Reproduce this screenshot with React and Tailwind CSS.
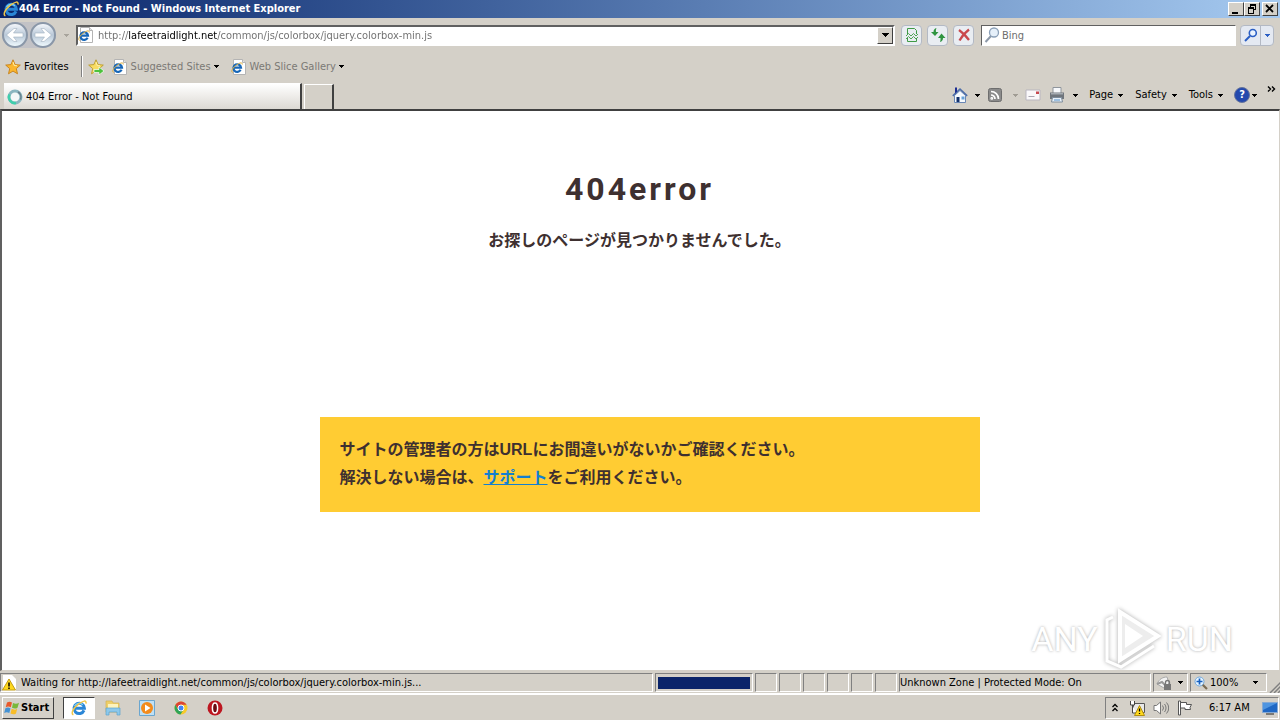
const UI = "font-['DejaVu_Sans_Condensed','DejaVu_Sans',sans-serif]";

function Caret({ className = "text-black" }) {
  return (
    <svg viewBox="0 0 5 3" className={`h-[3px] w-[5px] shrink-0 ${className}`} shapeRendering="crispEdges" aria-hidden="true">
      <path d="M0 0h5v1H0zM1 1h3v1H1zM2 2h1v1H2z" fill="currentColor" />
    </svg>
  );
}

function IeGlyph({ className }) {
  return (
    <svg viewBox="0 0 16 16" className={`shrink-0 ${className}`} aria-hidden="true">
      <path d="M13 10.400A5.200 5.200 0 1 1 13.400 8.200H4.200" fill="none" stroke="#2a86d6" strokeWidth="3" />
      <path d="M11.800 4.800A5.200 5.200 0 0 0 3.500 6" fill="none" stroke="#7fd0f8" strokeWidth="1.300" />
      <path d="M2.400 14.800C-.6 13.500 2.500 8 7.500 4.200S15.500 0 15 3.600" fill="none" stroke="#f0c648" strokeWidth="1.500" />
    </svg>
  );
}

function IePage() {
  return (
    <svg viewBox="0 0 16 16" className="h-4 w-4 shrink-0" aria-hidden="true">
      <path d="M2.500.5h9l3 3v12h-12z" fill="#fff" stroke="#b4b4b4" />
      <path d="M11.500.5v3h3" fill="#e3e3e3" stroke="#b4b4b4" />
      <path d="M9.600 10.800A3.800 3.800 0 1 1 10 8.700H3.500" fill="none" stroke="#1767b8" strokeWidth="2.200" />
      <path d="M1.500 13.500C-.5 12 2 8.500 5.500 6S11.500 3 11.300 5.500" fill="none" stroke="#e0b040" />
    </svg>
  );
}

function Star({ add }) {
  return (
    <svg viewBox="0 0 16 16" className="h-4 w-4 shrink-0" aria-hidden="true">
      <path d="M8 .8l2.100 4.800 5.200.5-4 3.500 1.200 5.200L8 12.100l-4.500 2.700 1.200-5.200-4-3.500 5.200-.5z" fill={add ? "#f8dc63" : "#fbb62d"} stroke={add ? "#b99a28" : "#c57f16"} strokeWidth=".9" />
      <path d="M8 3l1.200 3.500 2.800.3" fill="none" stroke="#fff0a8" />
      {add && <path d="M6 10.500h5V8l5 4-5 4v-2.500H6z" fill="#4cc23c" stroke="#fff" strokeWidth=".7" />}
    </svg>
  );
}

function RoundArrow({ flip, label }) {
  return (
    <button aria-label={label} className="h-[26px] w-[26px] shrink-0 rounded-full border-2 border-[#8a97a8] bg-linear-to-b from-[#f4f7fb] via-[#b9c8d8] to-[#eef8fc]">
      <svg viewBox="0 0 22 22" className={flip ? "h-[22px] w-[22px] rotate-180" : "h-[22px] w-[22px]"} aria-hidden="true">
        <path d="M2.500 11L10 4.500h3L9.500 9H19v4H9.500l3.500 4.500h-3z" fill="#fff" stroke="#a3b1c1" strokeWidth=".6" />
      </svg>
    </button>
  );
}

function WinButton({ label, children }) {
  return (
    <button aria-label={label} className="h-[14px] w-4 border border-t-white border-l-white border-r-[#404040] border-b-[#404040] bg-[#d4d0c8]">
      <svg viewBox="0 0 14 12" className="h-3 w-[14px]" shapeRendering="crispEdges" aria-hidden="true">{children}</svg>
    </button>
  );
}

function TitleBar() {
  return (
    <header className="flex h-[18px] items-center bg-linear-to-r from-[#0a246a] to-[#a6caf0] pr-0.5 pl-[3px]">
      <IeGlyph className="h-4 w-4" />
      <h1 className="flex-1 text-[11px] font-bold text-white">404 Error - Not Found - Windows Internet Explorer</h1>
      <WinButton label="Minimize"><path d="M3 9h6v2H3z" /></WinButton>
      <WinButton label="Restore">
        <path d="M5 1h6v2H5zM10 3h1v4H9V6h1zM5 3h1v1H5zM3 4h6v2H3zM3 6h1v4H3zM8 6h1v4H8zM3 10h6v1H3z" />
      </WinButton>
      <div className="ml-0.5 flex">
        <WinButton label="Close"><path d="M3 2l7 7M10 2L3 9" stroke="#000" strokeWidth="1.800" shapeRendering="auto" /></WinButton>
      </div>
    </header>
  );
}

const sunken = "border border-t-[#606060] border-l-[#606060] border-r-white border-b-white";
const toolButton = "flex h-[21px] w-[21px] shrink-0 items-center justify-center rounded-sm border border-[#b3b9c4] bg-[#e9edf2]";

function AddressRow() {
  return (
    <div className="flex h-[34px] items-center pr-1.5 pl-0.5">
      <nav className="flex items-center gap-0.5 rounded-full bg-[#c2c2c6]" aria-label="History">
        <RoundArrow label="Back" />
        <RoundArrow flip label="Forward" />
      </nav>
      <button aria-label="Recent pages" className="flex w-5 justify-center"><Caret className="text-[#a8a49c]" /></button>
      <div className={`flex h-[21px] flex-1 items-center border-2 bg-white ${sunken}`}>
        <IePage />
        <input
          aria-label="Address"
          defaultValue="http://lafeetraidlight.net/common/js/colorbox/jquery.colorbox-min.js"
          className="ml-1 h-[17px] min-w-0 flex-1 bg-[image:linear-gradient(to_right,#6d6d6d_30px,#000_30px,#000_119px,#6d6d6d_119px)] bg-clip-text text-transparent outline-none"
        />
        <button aria-label="Address history" className="flex h-[17px] w-4 items-center justify-center border border-t-white border-l-white border-r-[#404040] border-b-[#404040] bg-[#d4d0c8]">
          <svg viewBox="0 0 7 4" className="h-1 w-[7px]" shapeRendering="crispEdges" aria-hidden="true"><path d="M0 0h7v1H0zM1 1h5v1H1zM2 2h3v1H2zM3 3h1v1H3z" /></svg>
        </button>
      </div>
      <div className="mr-[7px] ml-1.5 flex gap-[5px]">
        <button aria-label="Compatibility view" className={toolButton}>
          <svg viewBox="0 0 16 16" className="h-4 w-4" fill="none" stroke="#3f9b46" aria-hidden="true">
            <path d="M3.500 7V1.500h7l2 2V7M3.500 11v3.500h9V11" />
            <path d="M2 9l2.500-2.500L7 9l2.500-2.500L12 9l2-2M2 12l2.500-2.500L7 12l2.500-2.500L12 12l2-2" strokeWidth=".9" />
          </svg>
        </button>
        <button aria-label="Refresh" className={toolButton}>
          <svg viewBox="0 0 16 16" className="h-4 w-4" fill="#2f9440" aria-hidden="true">
            <path d="M6.500 1C4.500 1.500 3.500 3 3.500 5H1l4 4 3.500-4H6C5.700 3.500 5.900 2.300 6.500 1zM10 15c2-.5 3-2 3-4h2.500l-4-4.500L8 11h2.500c.2 1.500 0 2.700-.5 4z" />
          </svg>
        </button>
        <button aria-label="Stop" className={toolButton}>
          <svg viewBox="0 0 16 16" className="h-4 w-4" aria-hidden="true">
            <path d="M3 3c3.500 2.500 7 6 10 10M13 2.500C9 5.500 6 9 3.500 13.500" stroke="#c9484c" strokeWidth="2.300" fill="none" />
          </svg>
        </button>
      </div>
      <div className={`flex h-[21px] w-[255px] items-center bg-white pl-0.5 ${sunken}`}>
        <svg viewBox="0 0 16 16" className="h-4 w-4 shrink-0" aria-hidden="true">
          <path d="M7 9l-5.500 6" stroke="#8c98a8" strokeWidth="2" />
          <circle cx="10" cy="5.500" r="4.500" fill="#e6f0fa" stroke="#8ba0b8" strokeWidth="1.300" />
        </svg>
        <input aria-label="Search" placeholder="Bing" className="ml-0.5 h-[17px] min-w-0 flex-1 outline-none placeholder:text-[#6d6d6d]" />
      </div>
      <div className="ml-1 flex rounded-sm border border-[#b3b9c4] bg-[#e4e9f2]">
        <button aria-label="Search Bing" className="flex h-[19px] w-5 items-center justify-center border-r border-[#b3b9c4]">
          <svg viewBox="0 0 14 14" className="h-[14px] w-[14px]" aria-hidden="true">
            <path d="M6 8l-5 5" stroke="#2b5fc4" strokeWidth="2" />
            <circle cx="8.800" cy="5" r="3.500" fill="#eaf3ff" stroke="#2b5fc4" strokeWidth="1.600" />
          </svg>
        </button>
        <button aria-label="Search options" className="flex w-3 items-center justify-center"><Caret className="text-[#2b5fc4]" /></button>
      </div>
    </div>
  );
}

function FavoritesBar() {
  return (
    <div className="flex h-[29px] items-center pl-[5px]">
      <button className="flex items-center gap-[3px]"><Star />Favorites</button>
      <div className="mr-[5px] ml-3 h-[21px] w-0.5 border-l border-[#808080] bg-white" />
      <button aria-label="Add to Favorites bar"><Star add /></button>
      <button className="ml-2 flex items-center gap-[3px] text-[#7b7975]"><IePage />Suggested Sites <Caret /></button>
      <button className="ml-3 flex items-center gap-[3px] text-[#7b7975]"><IePage />Web Slice Gallery <Caret /></button>
    </div>
  );
}

function TabRow() {
  return (
    <div className="flex h-[28px] items-end pl-1">
      <button className="flex h-[26px] w-[298px] items-center gap-[3px] border-t border-r-2 border-t-white border-r-[#404040] bg-linear-to-b from-white to-[#dcd9d3] pl-[3px]">
        <svg viewBox="0 0 16 16" className="h-4 w-4" fill="none" aria-hidden="true">
          <circle cx="8" cy="8" r="6" fill="#f4f8f8" stroke="#8ab6c0" strokeWidth="3" />
          <path d="M2.500 5.500A6 6 0 0 0 9 14" stroke="#3fcfac" strokeWidth="2.500" />
          <path d="M11 3a6 6 0 0 1 2.500 7.500" stroke="#687f8b" strokeWidth="1.500" />
        </svg>
        404 Error - Not Found
      </button>
      <button aria-label="New tab" className="ml-0.5 h-[25px] w-[30px] border-t border-r-2 border-l border-t-white border-l-white border-r-[#404040]" />
      <div className="ml-auto flex h-full items-center pr-1">
        <button aria-label="Home" className="flex items-center gap-[7px]">
          <svg viewBox="0 0 16 16" className="h-4 w-4" aria-hidden="true">
            <path d="M2.500 8.500L8 3.500l5.500 5v7h-11z" fill="#f5f9fd" stroke="#6a87b5" />
            <path d="M.8 8.800L8 2l7.200 6.800" fill="none" stroke="#4e6ea8" strokeWidth="1.600" />
            <path d="M3 .5h2v4l-2 2z" fill="#1d2d92" /><path d="M4.500 10h3v5h-3z" fill="#12306b" /><path d="M9.500 9.500h3v3h-3z" fill="#67a1d8" />
          </svg>
          <Caret />
        </button>
        <button aria-label="Feeds" className="ml-[7px] flex items-center gap-2.5">
          <svg viewBox="0 0 16 16" className="h-4 w-4" fill="none" stroke="#fff" strokeWidth="1.700" aria-hidden="true">
            <rect x="1.500" y="1.500" width="13" height="13" rx="2" fill="#8b8b8b" stroke="#6e6e6e" strokeWidth="1" />
            <path d="M4 4.500A7.500 7.500 0 0 1 11.500 12M4 8a4 4 0 0 1 4 4" /><circle cx="4.800" cy="11.400" r=".6" />
          </svg>
          <Caret className="text-[#a09c94]" />
        </button>
        <button aria-label="Read mail" className="ml-[7px]">
          <svg viewBox="0 0 16 12" className="h-3 w-4" aria-hidden="true">
            <path d="M1 1h14v10H1z" fill="#faf8fa" stroke="#b9b6bf" /><path d="M11 2.500h3v2.500h-3z" fill="#c74850" /><path d="M3.500 7.500h6" stroke="#a9a5b0" />
          </svg>
        </button>
        <button aria-label="Print" className="ml-2 flex items-center gap-2">
          <svg viewBox="0 0 16 16" className="h-4 w-4" aria-hidden="true">
            <path d="M4 .5h8v6H4z" fill="#f7f9fc" stroke="#8f959c" />
            <path d="M1 5.500h14v6.500H1z" fill="#6f757c" /><path d="M2 6h12v1.500H2z" fill="#a5abb1" />
            <path d="M3.500 10.500h9l1 4.500h-11z" fill="#e7f0fa" stroke="#7d8c9b" /><path d="M5 13h6" stroke="#5390c8" />
          </svg>
          <Caret />
        </button>
        <button className="ml-[11px] flex items-center gap-[5px]">Page <Caret /></button>
        <button className="ml-3 flex items-center gap-[5px]">Safety <Caret /></button>
        <button className="ml-3 flex items-center gap-[5px]">Tools <Caret /></button>
        <button aria-label="Help" className="ml-[11px] flex items-center gap-0.5">
          <span className="flex h-4 w-4 items-center justify-center rounded-full border border-[#66749c] bg-[#2449ad] text-[11px] font-bold text-white">?</span>
          <Caret />
        </button>
        <button aria-label="More commands" className="mb-3 ml-2.5">
          <svg viewBox="0 0 9 6" className="h-1.5 w-[9px]" fill="none" stroke="#000" strokeWidth="1.400" aria-hidden="true"><path d="M1 .5L3.500 3 1 5.500M5 .5L7.500 3 5 5.500" /></svg>
        </button>
      </div>
    </div>
  );
}

function Watermark() {
  const face = "font-['Roboto',sans-serif] text-[34px] leading-none font-normal text-white [text-shadow:0_0_3px_#aaaaaa]";
  return (
    <div className="absolute right-[46px] bottom-0 flex items-center gap-1">
      <span className={face}>ANY</span>
      <svg viewBox="0 0 60 62" className="h-[62px] w-[60px] overflow-visible drop-shadow-[0_0_2px_#aaaaaa]" fill="none" stroke="#fff" strokeWidth="4" aria-hidden="true">
        <path d="M18 4v48L56 28z" fill="#ededed" /><path d="M23 16v24l18-12z" fill="#fff" stroke="none" /><path d="M11 9L5 12v41l14 6 33-21" strokeWidth="3" />
      </svg>
      <span className={face}>RUN</span>
    </div>
  );
}

function PageView() {
  return (
    <main className="relative flex flex-1 flex-col items-center overflow-hidden border-t-2 border-r border-b border-l-2 border-t-[#404040] border-r-[#d4d0c8] border-b-[#d4d0c8] border-l-[#606060] bg-white pr-0.5 font-['Liberation_Sans','Noto_Sans_CJK_JP',sans-serif] text-base font-bold text-[#3e3030]">
      <h2 className="pt-[58px] font-['Roboto',sans-serif] text-[32px] leading-[40px] tracking-[3px]">404error</h2>
      <p className="mt-[18px] leading-7">お探しのページが見つかりませんでした。</p>
      <section className="mt-[162px] ml-5 flex w-full max-w-[660px] flex-col bg-[#ffcc33] px-5 pt-[19px] pb-5 leading-7">
        <p>サイトの管理者の方はURLにお間違いがないかご確認ください。</p>
        <p>解決しない場合は、<a href="#support" className="text-[#147fd0] underline">サポート</a>をご利用ください。</p>
      </section>
      <Watermark />
    </main>
  );
}

const pane = "flex h-[19px] items-center border border-t-[#808080] border-l-[#808080] border-r-white border-b-white";

function StatusBar() {
  return (
    <footer className="flex h-[23px] items-center gap-0.5 border-t border-b border-t-[#d4d0c8] border-b-white">
      <div className={`${pane} min-w-0 flex-1 gap-1`}>
        <svg viewBox="0 0 16 16" className="h-4 w-4" aria-hidden="true">
          <path d="M2 0h9l4 4v12H2z" fill="#fff" /><path d="M8 4l6.500 11h-13z" fill="#ffd91c" stroke="#c29b12" /><path d="M8 7.500v4M8 12.500V14" stroke="#000" strokeWidth="1.500" />
        </svg>
        Waiting for http://lafeetraidlight.net/common/js/colorbox/jquery.colorbox-min.js...
      </div>
      <div className={`${pane} w-[98px] px-0.5`} role="progressbar" aria-label="Loading"><div className="h-3 flex-1 bg-[#0a246a]" /></div>
      {[0, 1, 2, 3, 4, 5].map((n) => <div key={n} className={`${pane} w-[22px]`} />)}
      <div className={`${pane} w-[252px]`}>Unknown Zone | Protected Mode: On</div>
      <button aria-label="Privacy report" className={`${pane} w-[35px] gap-1.5 pl-0.5`}>
        <svg viewBox="0 0 16 16" className="h-4 w-4" aria-hidden="true">
          <path d="M1 9c2-5 6-7 10-7l2 6-5 5z" fill="#f2f2f2" stroke="#aaa" /><path d="M1 9l5-2 3 3" fill="none" stroke="#999" strokeWidth="2" />
          <path d="M8 9h7v6H8z" fill="#777" /><path d="M9.500 9V7.500a2 2 0 0 1 4 0V9" fill="none" stroke="#777" strokeWidth="1.300" />
        </svg>
        <Caret />
      </button>
      <button className={`${pane} w-[77px] gap-0.5 pl-[3px]`}>
        <svg viewBox="0 0 14 14" className="h-[14px] w-[14px]" aria-hidden="true">
          <path d="M8 8l5 5" stroke="#7b6b52" strokeWidth="2.200" /><circle cx="5.500" cy="5.500" r="4.500" fill="#e4f3ff" stroke="#73a9dc" /><path d="M5.500 2.500v6M2.500 5.500h6" stroke="#1660c0" strokeWidth="1.700" />
        </svg>
        <span className="flex-1 text-left">100%</span>
        <Caret className="mr-2" />
      </button>
      <svg viewBox="0 0 11 12" className="h-3 w-[11px] self-end" stroke="#808080" strokeWidth="1.500" aria-hidden="true"><path d="M1 12L12 1M5 12l7-7M9 12l3-3" /></svg>
    </footer>
  );
}

function Taskbar() {
  return (
    <footer className="flex h-[26px] items-center border-t border-white pr-px pl-0.5">
      <button className="flex h-[22px] w-[52px] items-center gap-px border border-t-white border-l-white border-r-[#404040] border-b-[#404040] pl-px text-[11px] font-bold">
        <svg viewBox="0 0 16 16" className="h-4 w-4" aria-hidden="true">
          <path d="M3 2.500C5 1.300 6.500 1.500 8 2.500L6.800 7.300C5 6.200 3.500 6.200 1.700 7.300z" fill="#e8592b" />
          <path d="M9 3c2 1 4 1 6-.3l-1.500 5c-1.800 1.200-3.500 1-5.500 0z" fill="#79b83a" />
          <path d="M1.400 8.300c1.800-1 3.300-1 5.100.1L5.300 13c-1.800-1-3.300-1-5.100 0z" fill="#4492d4" />
          <path d="M7.700 8.800c2 1 3.700 1.200 5.500 0L12 13.500c-1.800 1.200-3.500 1-5.500 0z" fill="#f8bd28" />
        </svg>
        Start
      </button>
      <button aria-label="Internet Explorer" className="mr-2.5 ml-[9px] flex h-[22px] w-8 items-center justify-center border border-t-[#404040] border-l-[#404040] border-r-white border-b-white bg-white"><IeGlyph className="h-4 w-4" /></button>
      <div className="flex items-center gap-[18px]">
        <button aria-label="Explorer">
          <svg viewBox="0 0 16 16" className="h-4 w-4" aria-hidden="true">
            <path d="M1 1h6l1 2h6v9H1z" fill="#eecf69" stroke="#d4b352" strokeWidth=".7" /><path d="M3 4h10v5H3z" fill="#fdf3bd" />
            <path d="M1 8h14v7h-3v-3H4v3H1z" fill="#8cc8eb" stroke="#5ba5cd" strokeWidth=".7" />
          </svg>
        </button>
        <button aria-label="Media player">
          <svg viewBox="0 0 16 16" className="h-4 w-4" aria-hidden="true">
            <path d="M.5.5h15v15H.5z" fill="#bfe0f5" stroke="#6ba6cf" /><circle cx="8" cy="8" r="6" fill="#f38b1c" /><path d="M6 4.500v7L11.500 8z" fill="#fff" />
          </svg>
        </button>
        <button aria-label="Chrome">
          <svg viewBox="0 0 16 16" className="h-4 w-4" aria-hidden="true">
            <circle cx="8" cy="8" r="6.500" fill="#f7ca2a" /><path d="M2.400 4.800A6.500 6.500 0 0 1 13.600 4.800H8L5 9.600z" fill="#dc4435" />
            <path d="M2.400 4.800A6.500 6.500 0 0 0 7.500 14.500L10.600 9.500 5 9.500z" fill="#2fa457" /><circle cx="8" cy="8" r="3" fill="#4285f4" stroke="#fff" />
          </svg>
        </button>
        <button aria-label="Opera">
          <svg viewBox="0 0 16 16" className="h-4 w-4" aria-hidden="true"><circle cx="8" cy="8" r="7.500" fill="#bd1620" /><ellipse cx="8" cy="8" rx="2.600" ry="5" fill="#6c0b12" stroke="#fff" strokeWidth="1.500" /></svg>
        </button>
      </div>
      <div className={`ml-auto ${pane} h-[22px] w-[174px] pl-1.5`}>
        <button aria-label="Show hidden icons">
          <svg viewBox="0 0 6 9" className="h-[9px] w-1.5" fill="none" stroke="#000" strokeWidth="1.300" aria-hidden="true"><path d="M.5 4L3 1.500 5.500 4M.5 8L3 5.500 5.500 8" /></svg>
        </button>
        <svg viewBox="0 0 16 16" className="ml-[11px] h-4 w-4" aria-hidden="true">
          <path d="M4.500 3.500h11v9h-11z" fill="#e8e8e8" stroke="#555" /><path d="M1.500 1v4h4V1M3.500 5v8H7" fill="#fff" stroke="#444" /><path d="M10.500 5.500l5 10h-10z" fill="#ffd91c" stroke="#b18e12" /><path d="M10.500 8.500v3M10.500 13v1" stroke="#000" strokeWidth="1.300" />
        </svg>
        <svg viewBox="0 0 16 16" className="ml-2 h-4 w-4" fill="none" stroke="#777" aria-hidden="true">
          <path d="M1 5.500h2.500L7.500 2v12L3.500 10.500H1z" fill="#fff" /><path d="M9.500 5.500a4 4 0 0 1 0 5M11.500 4a6 6 0 0 1 0 8M13.500 2.500a8 8 0 0 1 0 11" />
        </svg>
        <svg viewBox="0 0 16 16" className="ml-2 h-4 w-4" fill="#fff" stroke="#555" aria-hidden="true"><path d="M1.500 1h2v14h-2z" /><path d="M3.500 2.500h6v2h5l-1.500 3 .5 2H8v-1.500H3.500z" /></svg>
        <time className="ml-4">6:17 AM</time>
        <svg viewBox="0 0 16 14" className="ml-auto h-[14px] w-4" aria-hidden="true"><path d="M.5 1.500h15v10H.5z" fill="#2068c4" stroke="#85a9d4" /><path d="M1 2h14L1 9z" fill="#4f95e0" /><path d="M4 13h8" stroke="#222" /></svg>
      </div>
    </footer>
  );
}

export default function App() {
  return (
    <div className={`flex min-h-screen flex-col bg-[#d4d0c8] text-[11px] leading-4 whitespace-nowrap text-black ${UI}`}>
      <TitleBar />
      <AddressRow />
      <FavoritesBar />
      <TabRow />
      <PageView />
      <StatusBar />
      <Taskbar />
    </div>
  );
}
